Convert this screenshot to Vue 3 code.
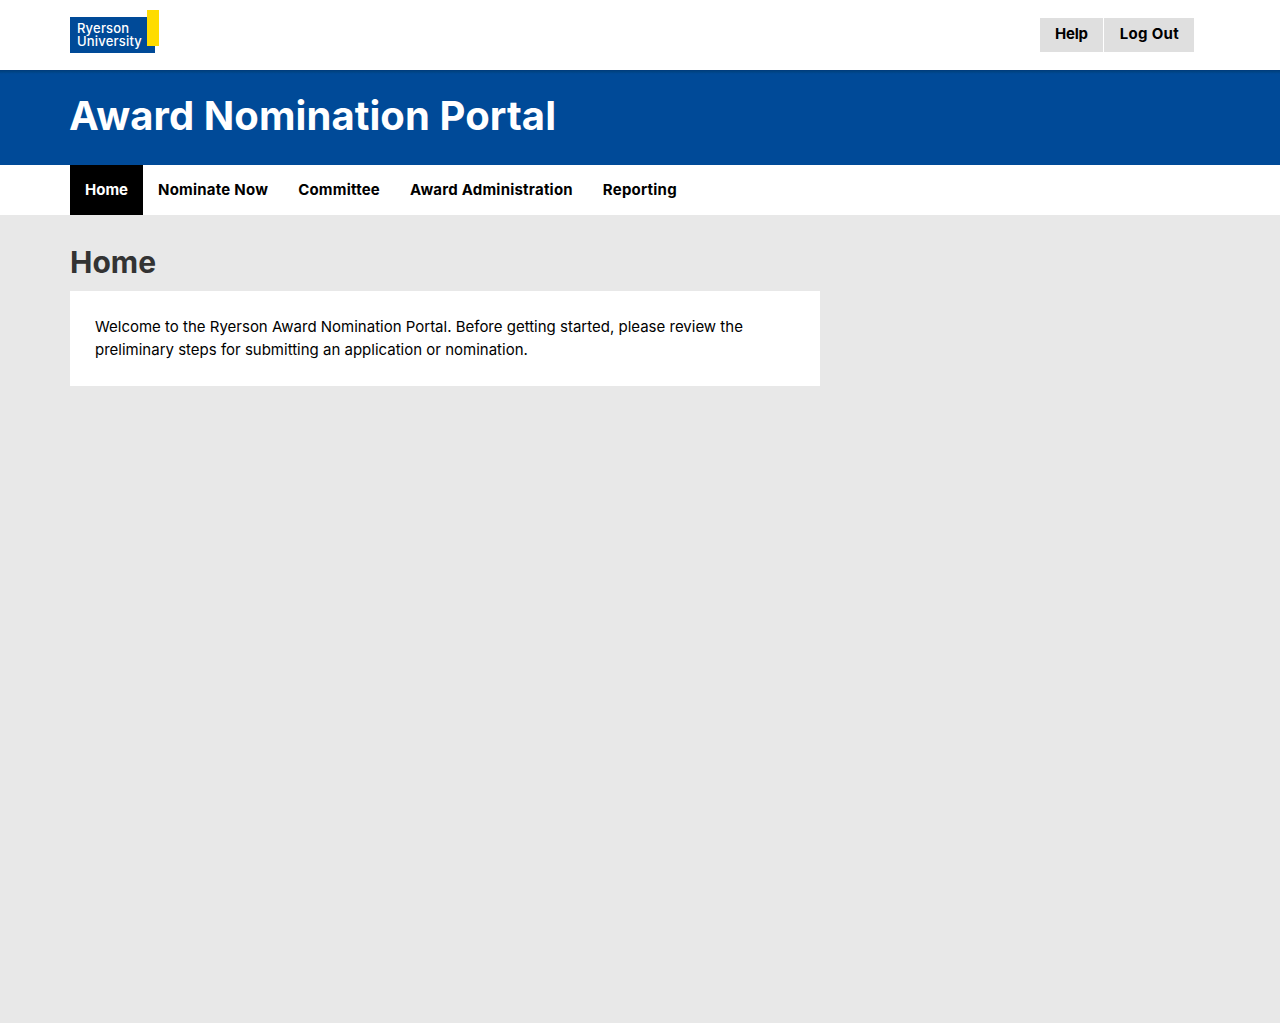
<script setup>
const navItems = ['Home', 'Nominate Now', 'Committee', 'Award Administration', 'Reporting']
</script>

<template>
  <div class="page">
    <header class="top">
      <div class="logo">
        <div class="logo-blue">Ryerson
University</div>
        <div class="logo-yellow"></div>
      </div>
      <div class="actions">
        <a class="action help">Help</a>
        <a class="action logout">Log Out</a>
      </div>
    </header>
    <div class="banner">
      <h1>Award Nomination Portal</h1>
    </div>
    <nav class="nav">
      <a v-for="(item, i) in navItems" :key="item" class="nav-item" :class="{ active: i === 0 }">{{ item }}</a>
    </nav>
    <main class="main">
      <h2>Home</h2>
      <section class="card">
        <p>Welcome to the Ryerson Award Nomination Portal. Before getting started, please review the preliminary steps for submitting an application or nomination.</p>
      </section>
    </main>
  </div>
</template>

<style>
html, body { margin: 0; background: #fff; }
</style>

<style scoped>
.page {
  height: 1023px;
  display: flex;
  flex-direction: column;
  background: #e8e8e8;
  font-family: Inter, "Liberation Sans", sans-serif;
  color: #000;
}
.top {
  height: 70px;
  box-sizing: border-box;
  background: #fff;
  padding: 0 86px 0 70px;
  display: flex;
  justify-content: space-between;
  align-items: flex-start;
}
.logo {
  position: relative;
  width: 89px;
  height: 43px;
  margin-top: 10px;
}
.logo-blue {
  position: absolute;
  left: 0;
  top: 7px;
  width: 85px;
  height: 36px;
  box-sizing: border-box;
  background: #004a98;
  color: #fff;
  font-size: 13px;
  font-weight: 500;
  letter-spacing: 0.2px;
  line-height: 13px;
  padding: 5px 0 0 7px;
  white-space: pre-line;
}
.logo-yellow {
  position: absolute;
  right: 0;
  top: 0;
  width: 12px;
  height: 36px;
  background: #ffdc00;
}
.actions {
  display: flex;
  gap: 1px;
  margin-top: 18px;
}
.action {
  height: 34px;
  line-height: 32px;
  padding: 0 15px;
  background: #dfdfdf;
  font-size: 15px;
  font-weight: 700;
}
.help {
  letter-spacing: -0.2px;
}
.logout {
  padding-left: 16px;
  letter-spacing: 0.3px;
}
.banner {
  height: 95px;
  box-sizing: border-box;
  background: linear-gradient(to bottom, #003a7c 0, #004382 1.5px, #004a98 4px);
  padding: 0 70px 4px;
  display: flex;
  align-items: center;
}
h1 {
  margin: 0 0 0 -1px;
  color: #fff;
  font-size: 40px;
  font-weight: 700;
  letter-spacing: 0.08px;
  line-height: 1;
}
.nav {
  height: 50px;
  background: #fff;
  padding: 0 70px;
  display: flex;
}
.nav-item {
  padding: 0 15px;
  line-height: 50px;
  font-size: 15px;
  font-weight: 700;
  letter-spacing: 0.22px;
}
.nav-item.active {
  background: #000;
  color: #fff;
  letter-spacing: 0;
}
.main {
  padding: 0 70px;
}
h2 {
  margin: 29px 0 10px;
  color: #333;
  font-size: 30px;
  font-weight: 700;
  line-height: 37px;
}
.card {
  width: 750px;
  height: 95px;
  box-sizing: border-box;
  background: #fff;
  padding: 24px 25px;
}
.card p {
  margin: 0;
  font-size: 15px;
  line-height: 23px;
}
</style>
